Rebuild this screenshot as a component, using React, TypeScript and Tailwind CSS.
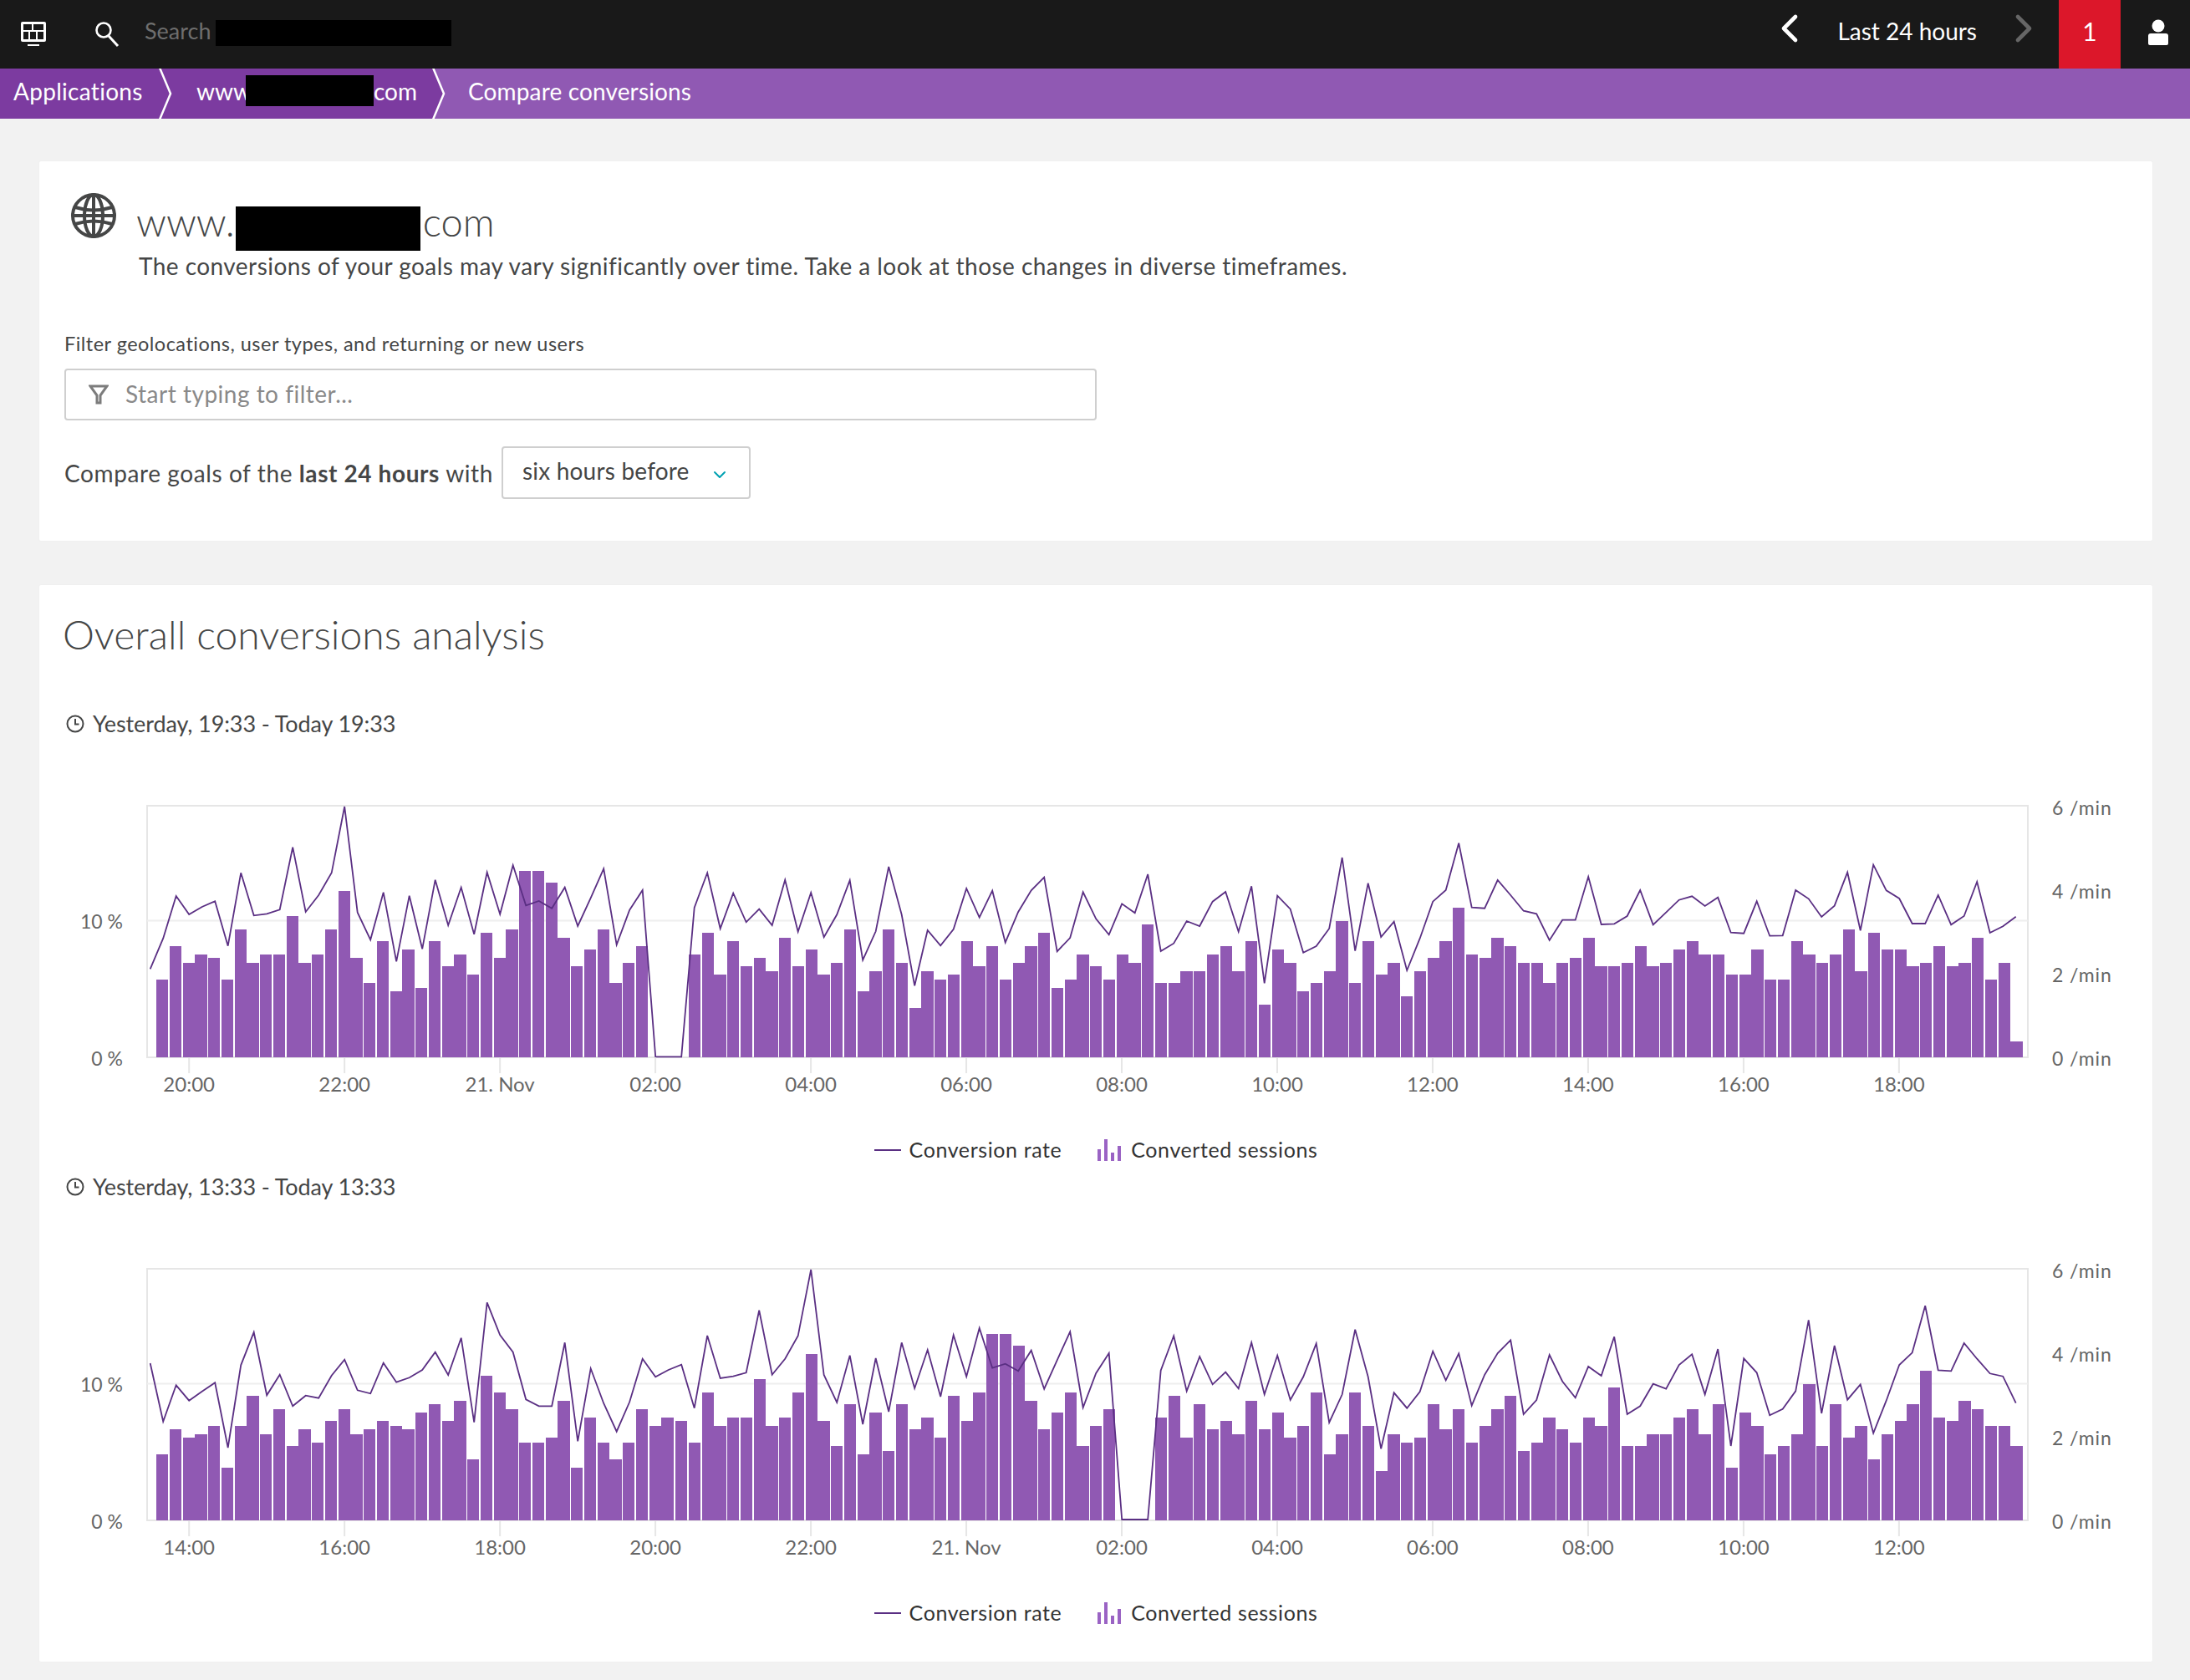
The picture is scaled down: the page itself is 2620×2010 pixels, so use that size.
import { ChevronDown, ChevronLeft, ChevronRight } from 'lucide-react';

const BAR_COLOR = '#9059b3';
const LINE_COLOR = '#5a2f83';

// Values below were read off 3x crops, so they are tops in crop pixels, not chart units
const firstBars = [
  693, 573, 633, 603, 615, 693, 513, 633, 603, 603, 465, 633, 603, 513, 375, 615, 705, 555, 735, 585, 723, 555, 645, 603,
  675, 525, 615, 513, 303, 303, 345, 543, 645, 585, 513, 705, 633, 573, 972, 972, 972, 603, 525, 675, 555, 645, 615, 663,
  543, 645, 585, 675, 633, 513, 735, 663, 513, 633, 795, 663, 693, 675, 555, 645, 573, 693, 633, 573, 525, 723, 693, 603,
  645, 693, 603, 633, 495, 705, 705, 663, 663, 603, 573, 663, 555, 783, 585, 633, 735, 705, 663, 483, 705, 555, 675, 633,
  753, 663, 615, 555, 435, 603, 615, 543, 573, 633, 633, 705, 633, 615, 543, 645, 645, 633, 573, 645, 633, 585, 555, 603,
  603, 675, 675, 585, 693, 693, 555, 603, 633, 603, 513, 663, 525, 585, 585, 645, 633, 573, 645, 633, 543, 693, 633, 915,
];
const firstLine = [
  655, 545, 393, 459, 432, 412, 572, 310, 463, 457, 442, 218, 450, 390, 310, 72, 452, 550, 380, 628, 392, 583, 335, 498,
  362, 530, 308, 458, 283, 427, 411, 437, 362, 501, 400, 295, 568, 443, 372, 970, 970, 970, 435, 310, 510, 383, 487, 440,
  498, 335, 521, 381, 541, 460, 337, 623, 520, 288, 460, 715, 516, 571, 512, 366, 470, 374, 560, 450, 373, 326, 592, 543,
  379, 475, 532, 421, 454, 315, 591, 563, 483, 501, 413, 378, 521, 358, 706, 392, 440, 596, 573, 510, 255, 590, 347, 540,
  485, 660, 545, 413, 372, 203, 434, 437, 336, 390, 446, 457, 552, 479, 479, 324, 495, 493, 465, 372, 496, 452, 407, 394,
  429, 398, 524, 527, 412, 536, 535, 372, 403, 468, 428, 308, 517, 281, 373, 402, 492, 492, 390, 496, 465, 342, 525, 502,
  467,
];
const secondBars = [
  747, 657, 687, 675, 645, 795, 645, 537, 675, 585, 717, 657, 705, 627, 585, 675, 657, 627, 645, 657, 597, 567, 627, 555,
  765, 465, 525, 585, 705, 705, 687, 555, 795, 615, 705, 765, 705, 585, 645, 615, 627, 705, 525, 645, 615, 615, 477, 645,
  615, 525, 387, 627, 717, 567, 747, 597, 735, 567, 657, 615, 687, 537, 627, 525, 315, 315, 357, 555, 657, 597, 525, 717,
  645, 585, 985, 985, 985, 615, 537, 687, 567, 657, 627, 675, 555, 657, 597, 687, 645, 525, 747, 675, 525, 645, 807, 675,
  705, 687, 567, 657, 585, 705, 645, 585, 537, 735, 705, 615, 657, 705, 615, 645, 507, 717, 717, 675, 675, 615, 585, 675,
  567, 795, 597, 645, 747, 717, 675, 495, 717, 567, 687, 645, 765, 675, 627, 567, 447, 615, 627, 555, 585, 645, 645, 717,
];
const secondLine = [
  421, 630, 500, 555, 522, 491, 724, 428, 310, 536, 462, 575, 537, 546, 465, 408, 518, 530, 420, 489, 473, 445, 381, 463,
  330, 633, 203, 320, 381, 551, 575, 575, 347, 701, 440, 565, 666, 560, 405, 470, 445, 426, 582, 322, 475, 468, 455, 231,
  462, 405, 323, 85, 463, 562, 393, 640, 403, 595, 347, 511, 373, 541, 320, 469, 295, 438, 423, 449, 375, 513, 410, 308,
  580, 457, 385, 982, 982, 982, 447, 323, 521, 397, 497, 453, 512, 347, 533, 393, 553, 470, 350, 634, 533, 300, 470, 728,
  527, 582, 523, 378, 482, 386, 573, 462, 385, 338, 604, 553, 391, 486, 545, 433, 466, 326, 604, 575, 495, 513, 427, 389,
  533, 370, 718, 404, 455, 608, 585, 521, 266, 601, 358, 552, 497, 672, 555, 427, 383, 215, 446, 449, 349, 405, 458, 468,
  564,
];

// every 4th gap closes up in the reference, so bars come in a repeating 4-step pattern
const barOffsets = [0, 16, 32, 46];
const barWidths = [14, 14, 14, 15];
const FRAME_LEFT = 175;
const FRAME_RIGHT = 2425;
const FRAME_TOP = 13;
const BASELINE = 314;

interface ChartProps {
  label: string;
  bars: number[];
  line: number[];
  cropBase: number;
  ticks: string[];
}

const GridIcon = () => (
  <svg width="32" height="32" viewBox="0 0 32 32">
    <rect x="1" y="1" width="30" height="24" rx="2" fill="#fff" />
    <rect x="4" y="4" width="10" height="7" fill="#191919" />
    <rect x="16" y="4" width="12" height="7" fill="#191919" />
    <rect x="4" y="13" width="6" height="9" fill="#191919" />
    <rect x="12" y="13" width="7" height="9" fill="#191919" />
    <rect x="21" y="13" width="7" height="9" fill="#191919" />
    <rect x="9" y="28" width="14" height="2" fill="#fff" />
  </svg>
);

const SearchIcon = () => (
  <svg width="32" height="32" viewBox="0 0 32 32" fill="none" stroke="#fff">
    <circle cx="11" cy="11" r="8.5" strokeWidth="2.6" />
    <path d="M17 18l11 12" strokeWidth="3" />
  </svg>
);

const UserIcon = () => (
  <svg width="26" height="32" viewBox="0 0 26 32" fill="#fff">
    <circle cx="13" cy="8" r="7.5" />
    <path d="M1 20q0-3 3-3h18q3 0 3 3v9q0 2-2 2H3q-2 0-2-2z" />
  </svg>
);

const GlobeIcon = () => (
  <svg width="54" height="54" viewBox="0 0 54 54" fill="none" stroke="#454646" strokeWidth="4">
    <circle cx="27" cy="27" r="25" />
    <ellipse cx="27" cy="27" rx="11" ry="25" />
    <path d="M27 2v50" />
    <path d="M5 17q22 7 44 0M5 37q22-7 44 0M2 27h50" />
  </svg>
);

const FilterIcon = () => (
  <svg width="24" height="24" viewBox="0 0 24 24" fill="none" stroke="#7c7c7c" strokeWidth="3">
    <path d="M2 2h20L14 13v9h-4v-9z" />
  </svg>
);

const ClockIcon = () => (
  <svg width="22" height="22" viewBox="0 0 22 22" fill="none" stroke="#454646" strokeWidth="2">
    <circle cx="11" cy="11" r="9.5" />
    <path d="M11 5v6.5h4.5" />
  </svg>
);

const Chevron = ({ left, right }: { left: string; right: string }) => (
  <svg width="16" height="60" viewBox="0 0 16 60" className="shrink-0">
    <polygon points="0,0 1,0 14,30 1,60 0,60" fill={left} />
    <polygon points="1,0 16,0 16,60 1,60 14,30" fill={right} />
    <polyline points="1,-1 14,30 1,61" fill="none" stroke="#fff" strokeWidth="2.5" />
  </svg>
);

const Chart = ({ label, bars, line, cropBase, ticks }: ChartProps) => {
  const points = line.map((top, i) => {
    const x = 178.7 + 15.5 * i;
    const y = BASELINE - (cropBase - top) / 3;
    return `${x.toFixed(1)},${y.toFixed(1)}`;
  });

  return (
    <div className="h-[554px] flex flex-col">
      <div className="h-10 flex items-center gap-[10px] pl-[32px] text-[27px] tracking-[-0.1px] text-[#454646]">
        <ClockIcon />
        <span>{label}</span>
      </div>
      <svg width="2530" height="360" viewBox="46 0 2530 360" className="mt-[65px] block">
        <rect
          x={FRAME_LEFT}
          y={FRAME_TOP}
          width={FRAME_RIGHT - FRAME_LEFT}
          height={BASELINE - FRAME_TOP}
          fill="none"
          stroke="#e6e6e6"
          strokeWidth="2"
        />
        <line x1={FRAME_LEFT} x2={FRAME_RIGHT} y1="150.5" y2="150.5" stroke="#eeeeee" strokeWidth="2" />
        <g shapeRendering="crispEdges">
          {bars.map((top, i) => {
            const h = Math.round((cropBase - top) / 3);
            if (h <= 0) return null;
            const x = Math.round(186 + 62.05 * Math.floor(i / 4)) + barOffsets[i % 4];
            return <rect key={i} x={x} y={BASELINE - h} width={barWidths[i % 4]} height={h} fill={BAR_COLOR} />;
          })}
        </g>
        <polyline points={points.join(' ')} fill="none" stroke={LINE_COLOR} strokeWidth="1.8" strokeLinejoin="miter" />
        {ticks.map((t, i) => {
          const x = 225.2 + 185.97 * i;
          return (
            <g key={t}>
              <line x1={x} x2={x} y1={BASELINE} y2={BASELINE + 19} stroke="#e6e6e6" strokeWidth="2" />
              <text x={x} y={BASELINE + 41} textAnchor="middle" fill="#666" fontSize="24">
                {t}
              </text>
            </g>
          );
        })}
        <text x="146" y="160" textAnchor="end" fill="#666" fontSize="23">10 %</text>
        <text x="146" y={BASELINE + 10} textAnchor="end" fill="#666" fontSize="23">0 %</text>
        {['6 /min', '4 /min', '2 /min', '0 /min'].map((t, i) => (
          <text key={t} x="2454" y={24 + 100 * i} fill="#666" fontSize="23" letterSpacing="0.9">{t}</text>
        ))}
      </svg>
      <div className="mt-[45px] h-10 flex items-center justify-center text-[25px] text-[#333] tracking-[0.6px]">
        <span className="w-8 h-[2px] bg-[#5a2f83] mr-[10px]" />
        <span>Conversion rate</span>
        <svg width="28" height="26" viewBox="0 0 28 26" className="ml-[43px] mr-[12px]" fill="#9a63c4">
          <rect x="0" y="12" width="4" height="14" />
          <rect x="8" y="0" width="4" height="26" />
          <rect x="16" y="16" width="4" height="10" />
          <rect x="24" y="8" width="4" height="18" />
        </svg>
        <span>Converted sessions</span>
      </div>
    </div>
  );
};

export default function App() {
  return (
    <div className="w-[2620px] min-h-[2010px] bg-[#f2f2f2] text-[#454646] font-[Lato,'Noto_Sans',sans-serif]">
      <header className="h-[82px] bg-[#191919] flex items-center text-white">
        <div className="ml-6">
          <GridIcon />
        </div>
        <div className="ml-[57px]">
          <SearchIcon />
        </div>
        <span className="ml-[28px] mb-[8px] text-[27px] text-[#6e6e6e]">Search</span>
        <span className="ml-[6px] mb-[3px] w-[282px] h-[31px] bg-black" />
        <div className="ml-auto flex items-center">
          <ChevronLeft size={56} strokeWidth={2} className="mb-[14px] text-white" />
          <span className="ml-[29px] mb-[8px] text-[28px]">Last 24 hours</span>
          <ChevronRight size={56} strokeWidth={2} className="ml-[28px] mb-[14px] text-[#666]" />
        </div>
        <div className="ml-[14px] w-[74px] h-full pb-[8px] bg-[#dc172a] flex items-center justify-center text-[30px]">1</div>
        <div className="ml-[32px] mr-[25px] mb-[5px]">
          <UserIcon />
        </div>
      </header>

      <nav className="h-[60px] bg-[#9059b3] flex text-[28px] text-white">
        <div className="w-[190px] pl-4 pb-[6px] bg-[#7c3ba0] flex items-center tracking-[0.3px]">Applications</div>
        <Chevron left="#7c3ba0" right="#7c3ba0" />
        <div className="w-[311px] pl-[29px] pb-[7px] bg-[#7c3ba0] flex items-center">
          <span>www</span>
          <span className="w-[153px] h-[37px] bg-black -ml-[7px]" />
          <span>com</span>
        </div>
        <Chevron left="#7c3ba0" right="#9059b3" />
        <div className="pl-[27px] pb-[6px] flex items-center tracking-[0.15px]">Compare conversions</div>
      </nav>

      <main className="pt-[50px] pl-[46px] pr-[44px]">
        <section className="h-[456px] bg-white rounded-[3px] border border-[#f0f0f0] pl-[30px]">
          <div className="flex pt-[38px] pl-[8px]">
            <GlobeIcon />
            <div className="ml-[27px]">
              <div className="flex items-center h-[53px] mt-[16px] text-[47px] font-light">
                <span className="-ml-[3px] mb-[16px]">www.</span>
                <span className="w-[221px] h-[53px] bg-black ml-[1px]" />
                <span className="ml-[3px] mb-[16px]">com</span>
              </div>
              <p className="text-[28px] -mt-[3px] tracking-[0.45px]">
                The conversions of your goals may vary significantly over time. Take a look at those changes in diverse timeframes.
              </p>
            </div>
          </div>
          <p className="mt-[55px] text-[23.5px] tracking-[0.48px]">Filter geolocations, user types, and returning or new users</p>
          <div className="mt-[12px] w-[1235px] h-[62px] border-2 border-[#cfcfcf] rounded-[4px] flex items-center pl-[27px]">
            <FilterIcon />
            <span className="ml-[20px] mb-[2px] text-[28px] tracking-[0.5px] text-[#898989]">Start typing to filter...</span>
          </div>
          <div className="mt-[31px] flex items-center">
            <span className="text-[28px] tracking-[0.6px]">
              Compare goals of the <b>last 24 hours</b> with
            </span>
            <div className="ml-[10px] w-[298px] h-[63px] border-2 border-[#cfcfcf] rounded-[4px] flex items-center pl-[23px]">
              <span className="mb-[5px] text-[28px] tracking-[0.2px]">six hours before</span>
              <ChevronDown size={24} className="ml-[24px] mt-[4px] text-[#00a1b2]" />
            </div>
          </div>
        </section>

        <section className="mt-[51px] bg-white rounded-[3px] border border-[#f0f0f0] pb-[34px]">
          <h2 className="pl-[28px] h-[121px] pt-[28px] text-[48px] font-light leading-[62px]">Overall conversions analysis</h2>
          <div className="mt-[25px]">
            <Chart
              label="Yesterday, 19:33 - Today 19:33"
              bars={firstBars}
              line={firstLine}
              cropBase={972}
              ticks={['20:00', '22:00', '21. Nov', '02:00', '04:00', '06:00', '08:00', '10:00', '12:00', '14:00', '16:00', '18:00']}
            />
            <Chart
              label="Yesterday, 13:33 - Today 13:33"
              bars={secondBars}
              line={secondLine}
              cropBase={985}
              ticks={['14:00', '16:00', '18:00', '20:00', '22:00', '21. Nov', '02:00', '04:00', '06:00', '08:00', '10:00', '12:00']}
            />
          </div>
        </section>
      </main>
    </div>
  );
}
